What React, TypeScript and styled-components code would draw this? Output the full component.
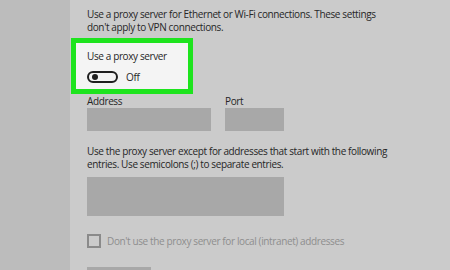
import React from "react";
import styled, { createGlobalStyle } from "styled-components";

const Global = createGlobalStyle`
  html, body { margin: 0; padding: 0; background: #cbcbcb; }
  body { font-family: "Open Sans", "Noto Sans", sans-serif; }
`;

const Page = styled.div`
  display: flex;
  width: 450px;
  height: 270px;
  overflow: hidden;
`;

const Sidebar = styled.aside`
  width: 70px;
  flex-shrink: 0;
  background: #bcbcbc;
`;

const Main = styled.main`
  flex: 1;
  background: #cbcbcb;
  display: flex;
  flex-direction: column;
  align-items: flex-start;
  padding: 8px 0 0 17px;
  color: #262626;
  font-size: 10px;
  letter-spacing: -0.38px;
  line-height: 13px;
  & > * {
    flex-shrink: 0;
  }
`;

const Para = styled.p<{ $top?: number }>`
  margin: ${(p) => p.$top ?? 0}px 0 0;
  width: 306px;
`;

const Highlight = styled.div`
  margin: 4px 0 0 -16px;
  width: 122px;
  height: 56px;
  box-sizing: border-box;
  border: 5px solid #1ee41e;
  background: #f4f4f4;
  padding: 7px 0 0 11px;
  display: flex;
  flex-direction: column;
  gap: 8px;
`;

const ToggleRow = styled.div`
  display: flex;
  align-items: center;
  gap: 8px;
  height: 12px;
`;

const Toggle = styled.span`
  width: 31px;
  height: 12px;
  box-sizing: border-box;
  border: 2px solid #1f1f1f;
  border-radius: 7px;
  display: flex;
  align-items: center;
  padding-left: 3px;
`;

const Knob = styled.span`
  width: 6px;
  height: 6px;
  border-radius: 50%;
  background: #1f1f1f;
`;

const FieldRow = styled.div`
  display: flex;
  gap: 14px;
  margin-top: 1px;
`;

const Field = styled.div`
  display: flex;
  flex-direction: column;
`;

const Input = styled.div<{ $w: number; $h?: number; $top?: number }>`
  width: ${(p) => p.$w}px;
  height: ${(p) => p.$h ?? 23}px;
  margin-top: ${(p) => p.$top ?? 0}px;
  background: #a8a8a8;
`;

const CheckRow = styled.div`
  display: flex;
  align-items: center;
  gap: 6px;
  margin-top: 18px;
  color: #8e8e8e;
`;

const Box = styled.span`
  width: 14px;
  height: 14px;
  box-sizing: border-box;
  border: 2px solid #8a8a8a;
`;

const Button = styled.div`
  margin-top: 19px;
  width: 64px;
  height: 24px;
  background: #a8a8a8;
`;

export default function App() {
  return (
    <>
      <Global />
      <Page>
        <Sidebar />
        <Main>
          <Para>
            Use a proxy server for Ethernet or Wi-Fi connections. These settings don't apply to VPN connections.
          </Para>
          <Highlight>
            <span>Use a proxy server</span>
            <ToggleRow>
              <Toggle>
                <Knob />
              </Toggle>
              <span>Off</span>
            </ToggleRow>
          </Highlight>
          <FieldRow>
            <Field>
              <span>Address</span>
              <Input $w={124} />
            </Field>
            <Field>
              <span>Port</span>
              <Input $w={59} />
            </Field>
          </FieldRow>
          <Para $top={14}>
            Use the proxy server except for addresses that start with the following entries. Use semicolons (;) to separate entries.
          </Para>
          <Input $w={197} $h={39} $top={6} />
          <CheckRow>
            <Box />
            <span>Don't use the proxy server for local (intranet) addresses</span>
          </CheckRow>
          <Button />
        </Main>
      </Page>
    </>
  );
}
